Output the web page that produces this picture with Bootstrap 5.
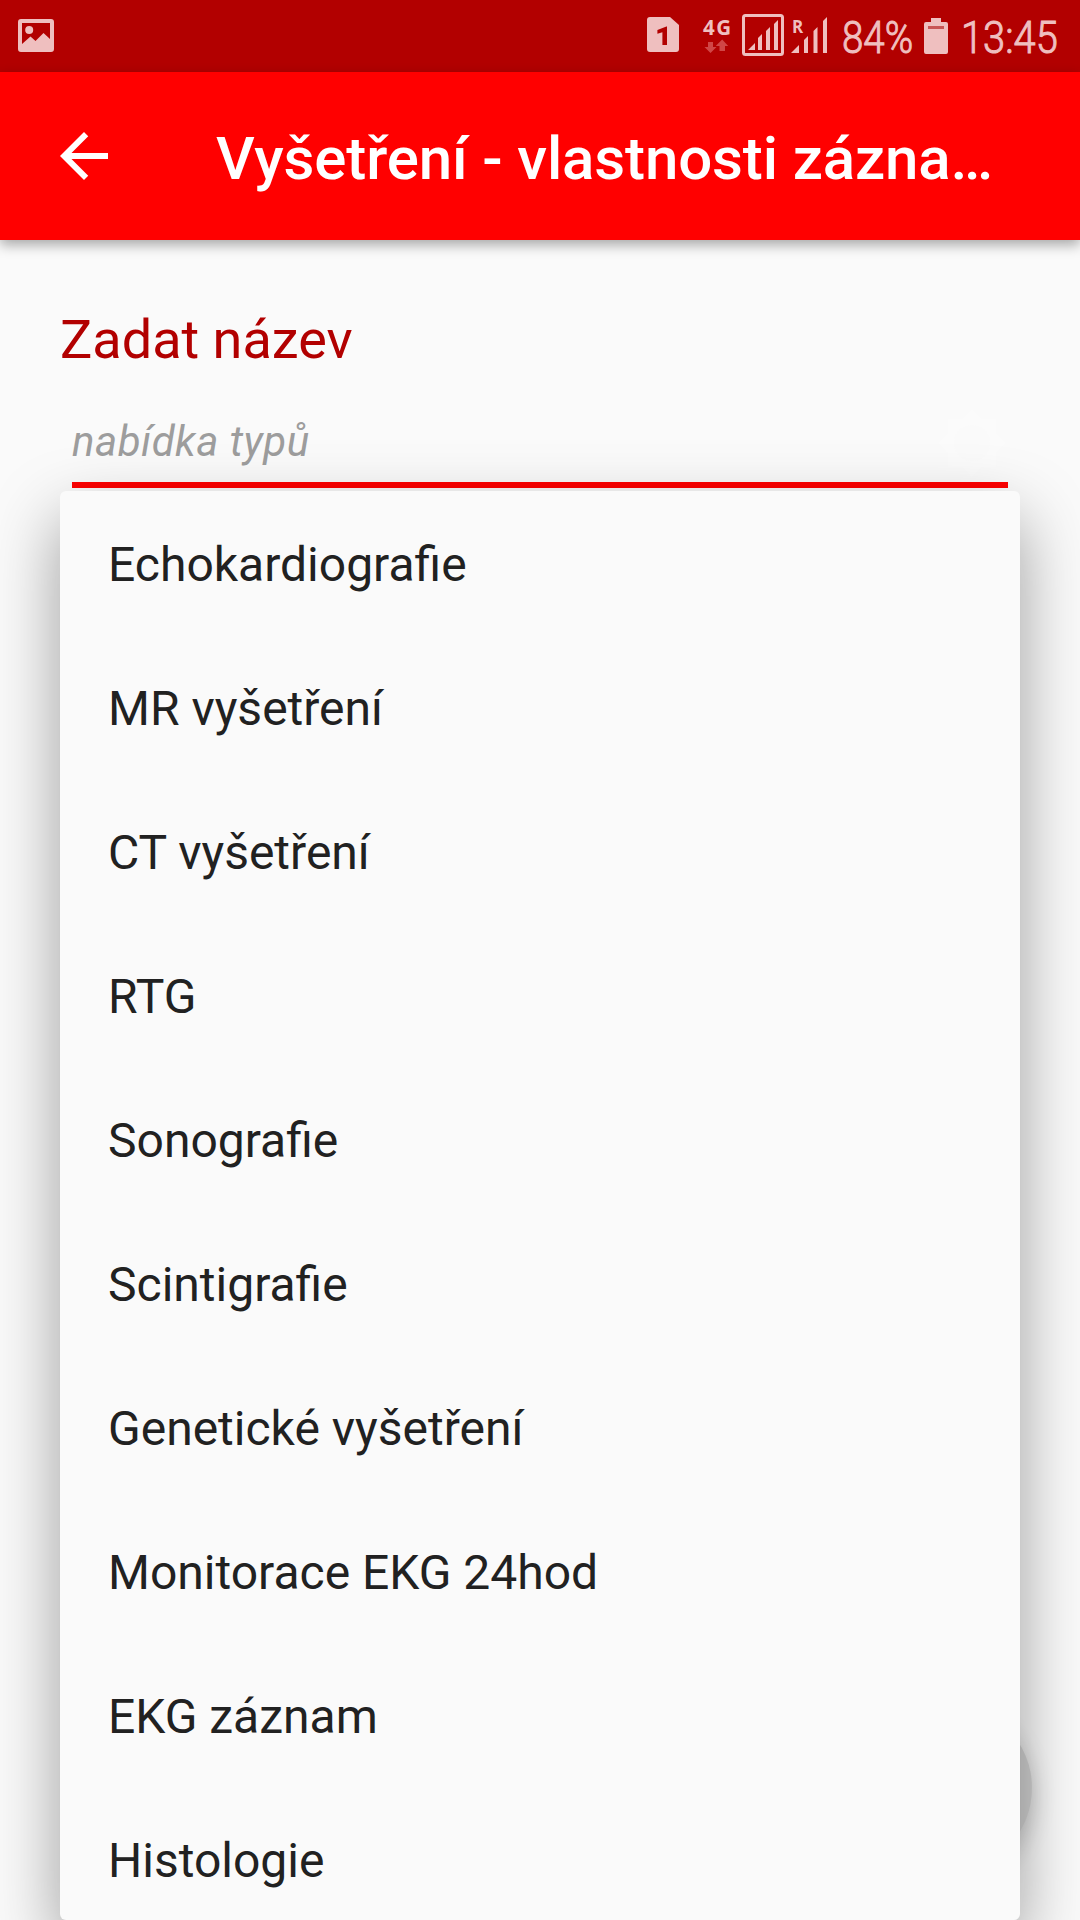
<!DOCTYPE html>
<html lang="cs">
<head>
<meta charset="utf-8">
<meta name="viewport" content="width=device-width, initial-scale=1">
<title>Vyšetření</title>
<link rel="stylesheet" href="https://cdn.jsdelivr.net/npm/bootstrap@5.3.0/dist/css/bootstrap.min.css">
<style>
  body { font-family: Roboto, "Liberation Sans", sans-serif; background: #fafafa; color: #212121; }
  .screen { width: 1080px; height: 1920px; }
  .statusbar { height: 72px; background: #b20000; color: #efbfbf; padding: 0 20px 0 18px; }
  .status-text { font-size: 45px; line-height: 76px; font-weight: 300; height: 72px; white-space: nowrap; }
  .status-text span { display: inline-block; transform-origin: left center; -webkit-text-stroke: 1px #efbfbf; }
  .battery-level { width: 76px; margin-left: 13px; }
  .battery-level span { transform: scaleX(.855); }
  .battery-icon { margin-left: 6px; }
  .clock-box { width: 99px; margin-left: 13px; }
  .clock-box span { transform: scaleX(.885); }
  .appbar { height: 168px; background: #f00; color: #fff; box-shadow: 0 5px 12px rgba(0,0,0,.33); padding: 0 86px 0 48px; z-index: 1; }
  .appbar-title { font-size: 60px; font-weight: 500; line-height: 72px; letter-spacing: -.13px; margin: 5px 0 0 96px; white-space: nowrap; }
  .form-body { padding: 0 60px; }
  .form-label-red { font-size: 54px; line-height: 64px; color: #b20000; margin: 68px 0 0; }
  .type-field { height: 81px; margin: 35px 12px 0; border-bottom: 6px solid #f00; }
  .type-hint { font-size: 42px; line-height: 50px; letter-spacing: .5px; font-style: italic; color: #9d9d9d; padding-top: 10px; }
  .suggestions { margin-top: 3px; height: 1429px; background: #fafafa; border-radius: 6px; box-shadow: 0 28px 68px rgba(0,0,0,.38); z-index: 2; }
  .suggestion { height: 144px; padding: 0 48px; font-size: 48px; line-height: 148px; flex: none; }
  .fab { left: 864px; top: 1704px; width: 168px; height: 168px; background: #d2d2d2; box-shadow: 0 8px 24px rgba(0,0,0,.2); }
  svg { display: block; flex: none; }
</style>
<script src="https://cdn.jsdelivr.net/npm/bootstrap@5.3.0/dist/js/bootstrap.bundle.min.js"></script>
</head>
<body>
<div class="screen position-relative overflow-hidden d-flex flex-column">
  <header class="statusbar d-flex align-items-start flex-shrink-0">
    <svg width="36" height="72" viewBox="18 0 36 72" fill="currentColor">
      <path fill-rule="evenodd" d="M21 19h30q3 0 3 3v27q0 3-3 3H21q-3 0-3-3V22q0-3 3-3zm1 4v21l8.500-7.500 5 4.500L43.500 33l6.500 6V23z"/>
      <circle cx="29.200" cy="30" r="4"/>
    </svg>
    <svg class="ms-auto" width="198" height="72" viewBox="630 0 198 72" fill="currentColor">
      <path d="M649 17h20l9 8v24q0 3-3 3h-26q-3 0-3-3V20q0-3 3-3z"/>
      <path fill="#b20000" d="M666 26.500v18.500h-4.600V32.200l-5 1.500v-3.800l9-3.400z"/>
      <text x="702" y="34.500" font-size="20.500" font-weight="700" font-family="Open Sans" textLength="28">4G</text>
      <path fill="#d04646" d="M707 42h5v5h3.500l-6 6-6-6h3.500zM718.500 51v-5h-3.800l6.500-6.500 6 6.500H724v5z"/>
      <rect x="742.500" y="15.500" width="39" height="39" rx="2" fill="none" stroke="currentColor" stroke-width="3"/>
      <path d="M747 50l7-7v7zM757 50V38l4-4v16zM765 50V31l4-4v23zM773 50V24l4-4v30z"/>
      <text x="791" y="32.500" font-size="17" font-weight="700" font-family="Open Sans">R</text>
      <path d="M790 53l8-8v8zM803 53V40l4-4v17zM812.500 53V31l4-4v26zM822 53V21l4-4v36z"/>
    </svg>
    <div class="status-text battery-level"><span>84%</span></div>
    <svg class="battery-icon" width="24" height="72" viewBox="924 0 24 72" fill="currentColor">
      <path d="M931 18h10v4h5q2 0 2 2v28q0 2-2 2h-20q-2 0-2-2V24q0-2 2-2h5z"/>
      <path fill="#c85555" d="M928 26h16v3h-16z"/>
    </svg>
    <div class="status-text clock-box"><span>13:45</span></div>
  </header>

  <nav class="appbar d-flex align-items-center position-relative flex-shrink-0">
    <svg width="72" height="72" viewBox="0 0 24 24" fill="#fff"><path d="M20 11H7.830l5.590-5.590L12 4l-8 8 8 8 1.410-1.410L7.830 13H20v-2z"/></svg>
    <h1 class="appbar-title">Vyšetření - vlastnosti zázna…</h1>
  </nav>

  <main class="form-body d-flex flex-column flex-shrink-0">
    <label class="form-label-red" for="typ">Zadat název</label>
    <div class="type-field d-flex justify-content-between" id="typ">
      <span class="type-hint">nabídka typů</span>
      <svg width="72" height="72" viewBox="0 0 24 24" fill="#fbfbfb"><path fill-rule="evenodd" d="M20 15.310L23.310 12 20 8.690V4h-4.690L12 .690 8.690 4H4v4.690L.690 12 4 15.310V20h4.690L12 23.310 15.310 20H20zM12 18a6 6 0 1 1 0-12 6 6 0 0 1 0 12z"/></svg>
    </div>
    <div class="suggestions position-relative d-flex flex-column overflow-hidden">
      <div class="suggestion">Echokardiografie</div>
      <div class="suggestion">MR vyšetření</div>
      <div class="suggestion">CT vyšetření</div>
      <div class="suggestion">RTG</div>
      <div class="suggestion">Sonografie</div>
      <div class="suggestion">Scintigrafie</div>
      <div class="suggestion">Genetické vyšetření</div>
      <div class="suggestion">Monitorace EKG 24hod</div>
      <div class="suggestion">EKG záznam</div>
      <div class="suggestion">Histologie</div>
    </div>
  </main>
  <div class="fab position-absolute rounded-circle"></div>
</div>
</body>
</html>
